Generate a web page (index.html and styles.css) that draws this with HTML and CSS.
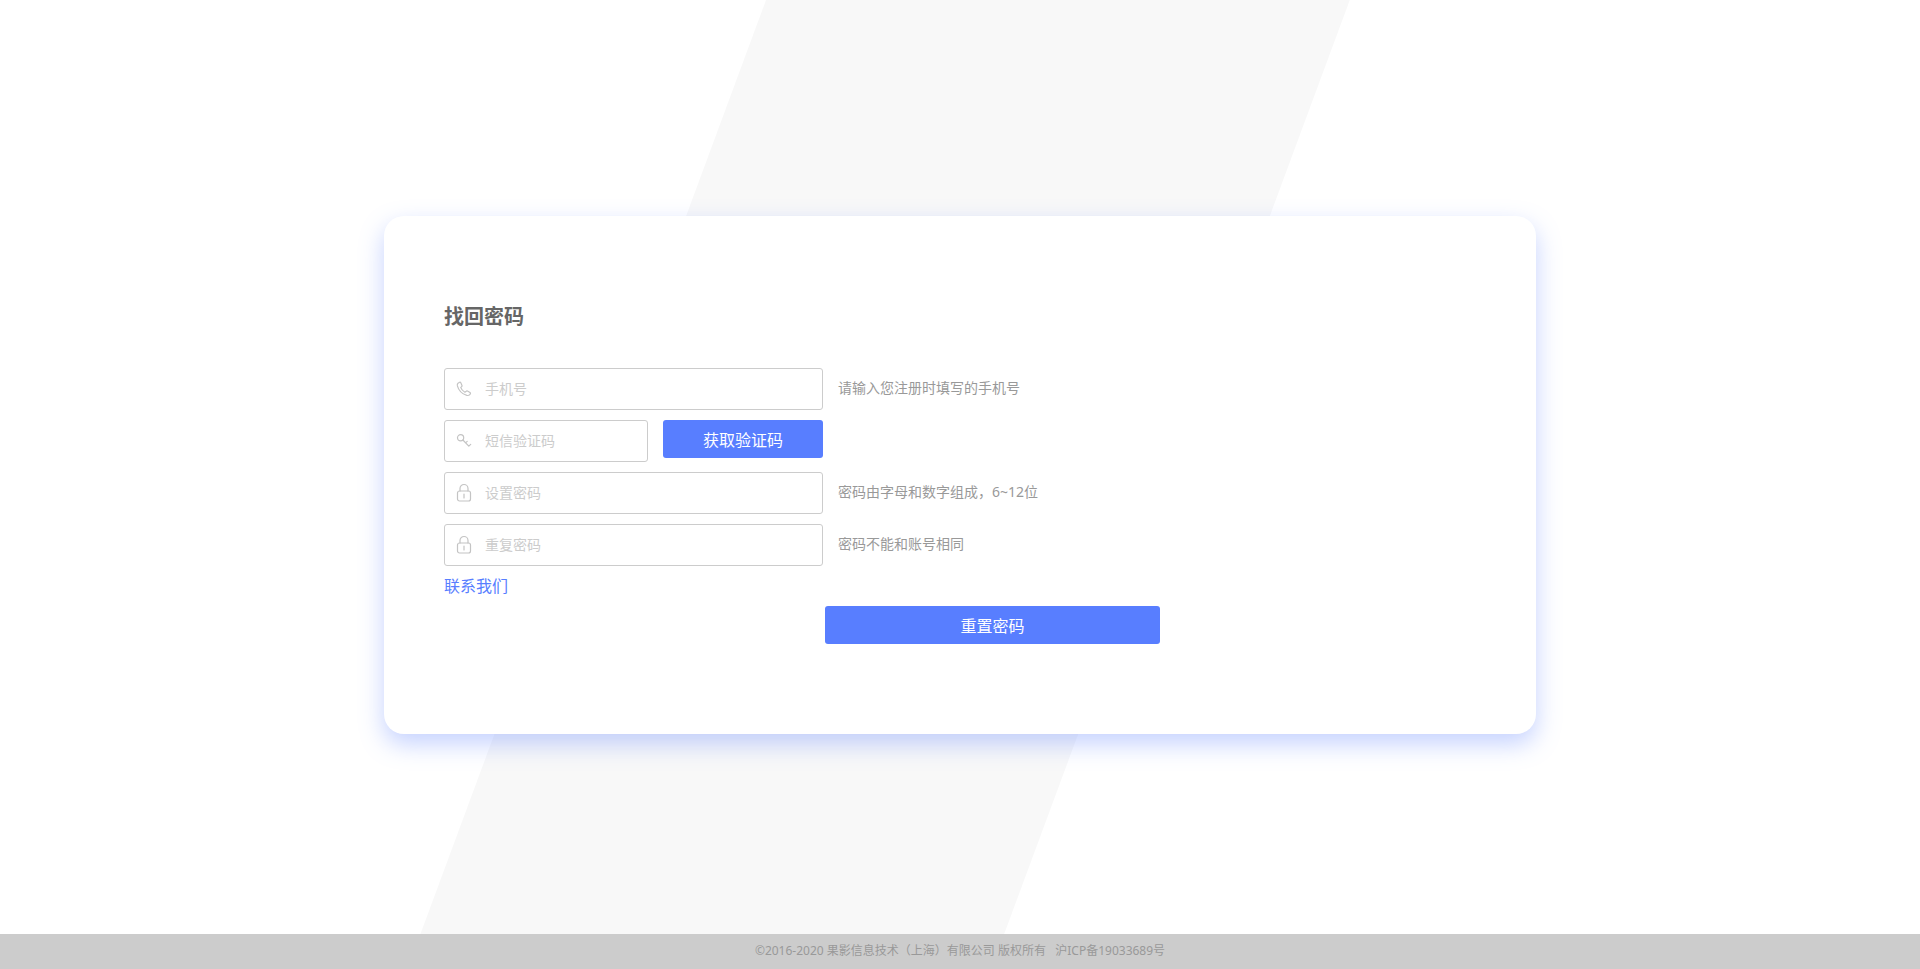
FILE: index.html
```html
<!DOCTYPE html>
<html lang="zh-CN">
<head>
    <meta charset="UTF-8">
    <meta name="viewport" content="width=device-width, initial-scale=1.0">
    <title>找回密码</title>
    <link rel="stylesheet" href="styles.css">
</head>
<body>
    <main class="main">
        <div class="card">
            <h2 class="title">找回密码</h2>
            <form class="form">
                <div class="row">
                    <div class="field">
                        <label for="phone" aria-label="手机号">
                            <svg class="icon" viewBox="0 0 16 20">
                                <path d="M2 4.2 3.6 3.3 Q4.4 3 4.8 3.8 L6 6.4 Q6.3 7.2 5.6 7.7 L4.7 8.4 Q5.6 11.2 8.9 13.2 L10.2 12.2 Q10.8 11.7 11.5 12.1 L14 13.6 Q14.8 14.1 14.3 14.8 L13.5 15.9 Q12.6 16.8 10.8 16.4 Q3.4 14.2 1.4 6.9 Q1 5 2 4.2Z"/>
                            </svg>
                        </label>
                        <input type="text" id="phone" placeholder="手机号">
                    </div>
                    <span class="tip">请输入您注册时填写的手机号</span>
                </div>
                <div class="row">
                    <div class="field field-code">
                        <label for="code" aria-label="短信验证码">
                            <svg class="icon" viewBox="0 0 16 20">
                                <circle cx="4.6" cy="6.8" r="3.1"/>
                                <path d="M6.9 9 12.8 15.2 14.7 13.3M9.6 11.9 11.2 10.4"/>
                            </svg>
                        </label>
                        <input type="text" id="code" placeholder="短信验证码">
                    </div>
                    <button type="button" class="btn btn-code">获取验证码</button>
                </div>
                <div class="row">
                    <div class="field">
                        <label for="password" aria-label="设置密码">
                            <svg class="icon" viewBox="0 0 16 20">
                                <rect x="1.5" y="8" width="13" height="10" rx="2"/>
                                <path d="M4 8V5.5a4 4 0 0 1 8 0V8M8 11v4"/>
                            </svg>
                        </label>
                        <input type="password" id="password" placeholder="设置密码">
                    </div>
                    <span class="tip">密码由字母和数字组成，6~12位</span>
                </div>
                <div class="row">
                    <div class="field">
                        <label for="repassword" aria-label="重复密码">
                            <svg class="icon" viewBox="0 0 16 20">
                                <rect x="1.5" y="8" width="13" height="10" rx="2"/>
                                <path d="M4 8V5.5a4 4 0 0 1 8 0V8M8 11v4"/>
                            </svg>
                        </label>
                        <input type="password" id="repassword" placeholder="重复密码">
                    </div>
                    <span class="tip">密码不能和账号相同</span>
                </div>
                <a href="#" class="contact">联系我们</a>
                <button type="submit" class="btn btn-reset">重置密码</button>
            </form>
        </div>
    </main>
    <footer class="footer">©2016-2020 果影信息技术（上海）有限公司 版权所有 &nbsp; 沪ICP备19033689号</footer>
</body>
</html>
```
FILE: styles.css
```css
* {
    margin: 0;
    padding: 0;
    box-sizing: border-box;
}

body {
    display: flex;
    flex-direction: column;
    min-height: 100vh;
    font-family: "Microsoft YaHei", "Noto Sans", "Noto Sans CJK SC", sans-serif;
    font-size: 14px;
    background: #fff;
}

input,
button {
    font-family: inherit;
}

.main {
    position: relative;
    flex: 1;
    display: flex;
    align-items: center;
    justify-content: center;
    padding-top: 16px;
}

/* 背景斜条 */
.main::before {
    content: "";
    position: absolute;
    inset: 0;
    background: #f8f8f8;
    clip-path: polygon(39.9% 0, 70.3% 0, 52.3% 100%, 21.9% 100%);
}

.card {
    position: relative;
    width: 60%;
    padding: 86px 60px 90px;
    background: #fff;
    border-radius: 20px;
    box-shadow: 0 10px 24px rgba(88, 126, 255, 0.35);
}

.title {
    height: 30px;
    margin-bottom: 36px;
    font-size: 20px;
    line-height: 30px;
    color: #666;
}

.form {
    display: flex;
    flex-direction: column;
    align-items: flex-start;
    gap: 10px;
}

.row {
    display: flex;
    gap: 15px;
    height: 42px;
}

.field {
    display: flex;
    align-items: center;
    gap: 13px;
    width: 379px;
    height: 42px;
    padding-left: 11px;
    border: 1px solid #ccc;
    border-radius: 3px;
}

.field-code {
    width: 204px;
}

.field input {
    flex: 1;
    min-width: 0;
    height: 40px;
    padding-bottom: 2px;
    border: none;
    outline: none;
    background: none;
    font-size: 14px;
    color: #666;
}

.field input::placeholder {
    color: #ccc;
}

.icon {
    display: block;
    width: 16px;
    height: 20px;
    fill: none;
    stroke: #c4c4c4;
    stroke-width: 1.2;
    stroke-linecap: round;
    stroke-linejoin: round;
}

.tip {
    line-height: 40px;
    color: #999;
}

.btn {
    height: 38px;
    border: none;
    border-radius: 3px;
    background: #587eff;
    font-size: 16px;
    color: #fff;
    cursor: pointer;
}

.btn-code {
    width: 160px;
}

.btn-reset {
    width: 335px;
    margin-left: 381px;
}

.contact {
    height: 20px;
    font-size: 16px;
    line-height: 20px;
    color: #587eff;
    text-decoration: none;
}

.footer {
    height: 35px;
    overflow: hidden;
    background: #ccc;
    font-size: 12px;
    line-height: 34px;
    text-align: center;
    color: #999;
}
```
